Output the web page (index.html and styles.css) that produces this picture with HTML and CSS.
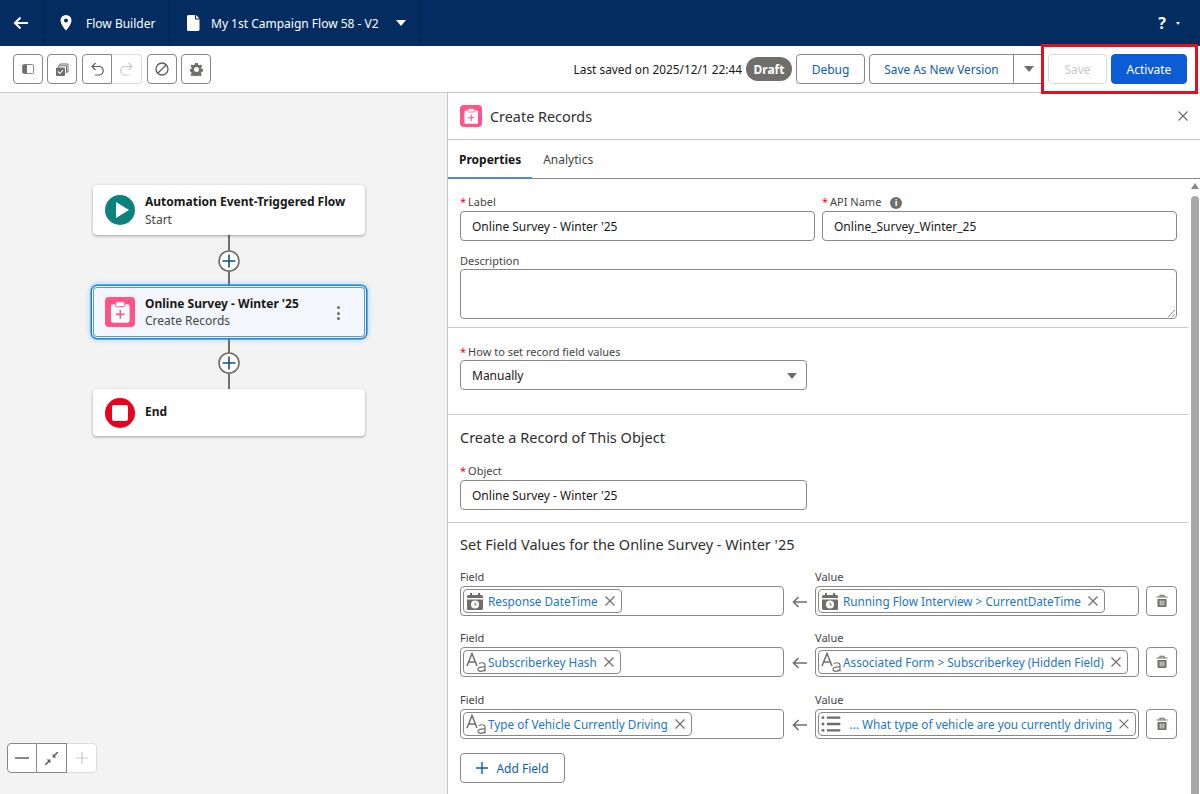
FILE: index.html
```html
<!DOCTYPE html>
<html lang="en">

<head>
    <meta charset="UTF-8">
    <title>Flow Builder</title>
    <link rel="stylesheet" href="styles.css">
</head>

<body>
    <svg class="defs" width="0" height="0">
        <symbol id="clip" viewBox="0 0 22 22">
            <rect x="4.400" y="5.400" width="13.600" height="13.400" rx="1.500" fill="#fff" />
            <rect x="7.800" y="3.500" width="6.800" height="3.600" rx="1.200" fill="#fff" stroke="#ff538a" stroke-width=".7" />
            <path d="M11.200 9.500v6.500M8 12.700h6.400" stroke="#ff538a" stroke-width="1.100" />
        </symbol>
        <symbol id="cal" viewBox="0 0 18 18">
            <path d="M1 4.500Q1 3 2.500 3h13Q17 3 17 4.500V6H1z" fill="#706e6b" />
            <path d="M4 1h2v2H4zM12 1h2v2h-2z" fill="#706e6b" />
            <path d="M1 7.500h16v9q0 1.500-1.500 1.500h-13Q1 18 1 16.500z" fill="#706e6b" />
            <circle cx="9" cy="12.500" r="4" fill="#fff" />
            <path d="M9 10.500v2.300h1.800" fill="none" stroke="#706e6b" stroke-width="1" />
        </symbol>
        <symbol id="text" viewBox="0 0 20 20">
            <path d="M1 14 6 1.500 11 14M2.800 10h6.400" fill="none" stroke="#706e6b" stroke-width="1.500" />
            <path d="M12.800 11.500q3.600-1.500 5.500 0 .7.600.7 2V19.500M19 15q-7-.5-7 2.300 0 2 2.800 2 2.700 0 4.200-2" fill="none" stroke="#706e6b" stroke-width="1.200" />
        </symbol>
        <symbol id="list" viewBox="0 0 20 20">
            <path d="M6 3.500h14M6 10h14M6 16.500h14" stroke="#706e6b" stroke-width="2.400" />
            <circle cx="2" cy="3.500" r="1.500" fill="#706e6b" />
            <circle cx="2" cy="10" r="1.500" fill="#706e6b" />
            <circle cx="2" cy="16.500" r="1.500" fill="#706e6b" />
        </symbol>
        <symbol id="x" viewBox="0 0 12 12">
            <path d="M1.500 1.500l9 9M10.500 1.500l-9 9" stroke="#706e6b" stroke-width="1.200" />
        </symbol>
        <symbol id="trash" viewBox="0 0 14 14">
            <path d="M5 2.500V1.200h4v1.300M1.500 3h11" fill="none" stroke="#706e6b" stroke-width="1.100" />
            <path d="M2.500 5h9v7q0 1-1 1h-7q-1 0-1-1z" fill="#706e6b" />
            <path d="M5.200 6.500v5M7 6.500v5M8.800 6.500v5" stroke="#fff" stroke-width=".8" />
        </symbol>
        <symbol id="left" viewBox="0 0 15 12">
            <path d="M15 6H1.500M6.500 1 1.500 6l5 5" fill="none" stroke="#706e6b" stroke-width="1.600" />
        </symbol>
        <symbol id="add" viewBox="0 0 22 22">
            <circle cx="11" cy="11" r="10" fill="#fff" stroke="#706e6b" stroke-width="1.600" />
            <path d="M11 4.500v13M4.500 11h13" stroke="#0b4f93" stroke-width="1.600" />
        </symbol>
    </svg>

    <header class="topbar">
        <div class="topcell backcell">
            <svg width="15" height="14" viewBox="0 0 15 14">
                <path d="M15 7H2M7.500 1.500 2 7l5.500 5.500" fill="none" stroke="#fff" stroke-width="2" />
            </svg>
        </div>
        <div class="topcell appcell">
            <svg width="12" height="16" viewBox="0 0 12 16">
                <path fill-rule="evenodd" fill="#fff" d="M6 0a5.500 5.500 0 0 0-5.500 5.500C.5 9.500 6 15.500 6 15.500s5.500-6 5.500-10A5.500 5.500 0 0 0 6 0zm0 7.500a2 2 0 1 1 0-4 2 2 0 0 1 0 4z" />
            </svg>
            <span>Flow Builder</span>
        </div>
        <div class="topcell flowcell">
            <svg width="13" height="16" viewBox="0 0 13 16">
                <path fill="#fff" d="M1.500 0H8v4.500h4.500V14.500q0 1.500-1.500 1.500H1.500Q0 16 0 14.500v-13Q0 0 1.500 0zM9 0l3.500 3.500H9z" />
            </svg>
            <span>My 1st Campaign Flow 58 - V2</span>
            <i class="caret white"></i>
        </div>
        <div class="helpbox">
            <span class="help">?</span>
            <i class="caret tiny"></i>
        </div>
    </header>

    <div class="toolbar">
        <div class="iconbtn">
            <svg width="12" height="10" viewBox="0 0 12 10">
                <rect x=".5" y=".5" width="11" height="9" rx="1" fill="none" stroke="#8a8886" />
                <rect x="1" y="1" width="4" height="8" fill="#706e6b" />
            </svg>
        </div>
        <div class="iconbtn">
            <svg width="13" height="13" viewBox="0 0 13 13">
                <path d="M4 2.500V1h8v8h-1.500M2.500 4V2.800h8V10" fill="none" stroke="#706e6b" />
                <rect x="0" y="4.500" width="9" height="8.500" rx="1" fill="#706e6b" />
                <path d="M2 8.500l2 2 3-3.500" fill="none" stroke="#fff" stroke-width="1.100" />
            </svg>
        </div>
        <div class="btngroup undogroup">
            <div class="iconbtn">
                <svg width="13" height="14" viewBox="0 0 13 14">
                    <path d="M1.500 4.500H8a4 4 0 0 1 0 8.500H4M4.500 1 1 4.500 4.500 8" fill="none" stroke="#5c5c5c" stroke-width="1.200" />
                </svg>
            </div>
            <div class="iconbtn disabled">
                <svg width="13" height="14" viewBox="0 0 13 14">
                    <path d="M11.500 4.500H5a4 4 0 0 0 0 8.500h4M8.500 1 12 4.500 8.500 8" fill="none" stroke="#c9c9c9" stroke-width="1.200" />
                </svg>
            </div>
        </div>
        <div class="iconbtn">
            <svg width="14" height="14" viewBox="0 0 14 14">
                <circle cx="7" cy="7" r="6" fill="none" stroke="#5c5c5c" stroke-width="1.300" />
                <path d="M3 11 11 3" stroke="#5c5c5c" stroke-width="1.300" />
            </svg>
        </div>
        <div class="iconbtn">
            <svg width="13" height="13" viewBox="0 0 13 13">
                <path fill-rule="evenodd" fill="#706e6b" d="M5.200 0h2.600l.4 1.700 1.300.6 1.500-.9 1.200 1.800-1.200 1.200.3 1.300 1.700.6v2.200l-1.700.5-.4 1.400 1 1.400-1.600 1.500-1.400-.9-1.300.5-.4 1.600H5.200l-.4-1.600-1.300-.5-1.400.9L.5 11.900l1-1.400-.4-1.400L0 8.500V6.300l1.400-.6.300-1.300L.5 3.200l1.200-1.800 1.500.9 1.300-.6zM6.500 4a2.500 2.500 0 1 0 0 5 2.500 2.500 0 0 0 0-5z" />
            </svg>
        </div>
        <div class="toolright">
            <span class="saved">Last saved on 2025/12/1 22:44</span>
            <span class="badge">Draft</span>
            <div class="btn debug">Debug</div>
            <div class="btngroup">
                <div class="btn saveas">Save As New Version</div>
                <div class="btn more"><i class="caret gray"></i></div>
            </div>
            <div class="btn save">Save</div>
            <div class="btn activate">Activate</div>
        </div>
        <div class="highlight"></div>
    </div>

    <main class="workspace">
        <section class="canvas">
            <div class="flowcol">
                <div class="node startnode">
                    <span class="nodeicon round teal">
                        <svg width="14" height="16" viewBox="0 0 14 16"><path d="M1 0 14 8 1 16z" fill="#fff" /></svg>
                    </span>
                    <div>
                        <div class="nodetitle">Automation Event-Triggered Flow</div>
                        <div class="nodesub">Start</div>
                    </div>
                </div>
                <div class="link first"><svg width="22" height="22"><use href="#add" /></svg></div>
                <div class="node selected">
                    <span class="nodeicon pink"><svg width="30" height="30"><use href="#clip" /></svg></span>
                    <div>
                        <div class="nodetitle">Online Survey - Winter '25</div>
                        <div class="nodesub">Create Records</div>
                    </div>
                    <span class="dots"><i></i><i></i><i></i></span>
                </div>
                <div class="link second"><svg width="22" height="22"><use href="#add" /></svg></div>
                <div class="node endnode">
                    <span class="nodeicon round red"><b></b></span>
                    <div class="nodetitle">End</div>
                </div>
            </div>
            <div class="zoomctl">
                <div class="zoombtn"><svg width="14" height="2"><rect width="14" height="2" fill="#8a8886" /></svg></div>
                <div class="zoombtn">
                    <svg width="13" height="13" viewBox="0 0 12 12">
                        <path d="M12 0 8 4M0 12l4-4" stroke="#5c5c5c" stroke-width="1.400" />
                        <path d="M7 1.500V5h3.500zM5 10.500V7H1.500z" fill="#5c5c5c" />
                    </svg>
                </div>
                <div class="zoombtn off">
                    <svg width="12" height="12"><path d="M6 0v12M0 6h12" stroke="#c9c9c9" stroke-width="1.200" /></svg>
                </div>
            </div>
        </section>

        <section class="panel">
            <div class="panelhead">
                <span class="panelicon"><svg width="22" height="22"><use href="#clip" /></svg></span>
                <h2>Create Records</h2>
                <svg class="panelclose" width="12" height="12"><use href="#x" /></svg>
            </div>
            <div class="tabs">
                <span class="tab active">Properties</span>
                <span class="tab">Analytics</span>
            </div>
            <div class="panelbody">
                <div class="content">
                    <div class="sec firstsec">
                        <div class="tworow">
                            <div class="fld">
                                <label><em>*</em>Label</label>
                                <div class="input">Online Survey - Winter '25</div>
                            </div>
                            <div class="fld">
                                <label><em>*</em>API Name <span class="info">i</span></label>
                                <div class="input">Online_Survey_Winter_25</div>
                            </div>
                        </div>
                        <div class="fld desc">
                            <label>Description</label>
                            <div class="input area">
                                <svg class="grip" width="8" height="8"><path d="M1 8 8 1M5 8l3-3" stroke="#706e6b" stroke-width=".8" /></svg>
                            </div>
                        </div>
                    </div>
                    <div class="sec howsec">
                        <div class="fld narrow">
                            <label><em>*</em>How to set record field values</label>
                            <div class="input select">Manually<i class="caret gray"></i></div>
                        </div>
                    </div>
                    <div class="sec objsec">
                        <h3>Create a Record of This Object</h3>
                        <div class="fld narrow">
                            <label><em>*</em>Object</label>
                            <div class="input">Online Survey - Winter '25</div>
                        </div>
                    </div>
                    <div class="sec last">
                        <h3>Set Field Values for the Online Survey - Winter '25</h3>
                        <div class="maprows">
                            <div class="maprow">
                                <div class="fld">
                                    <label>Field</label>
                                    <div class="input chipbox">
                                        <span class="chip"><svg width="18" height="18"><use href="#cal" /></svg><a>Response DateTime</a><svg class="chipx" width="12" height="12"><use href="#x" /></svg></span>
                                    </div>
                                </div>
                                <svg class="arrow" width="15" height="12"><use href="#left" /></svg>
                                <div class="fld">
                                    <label>Value</label>
                                    <div class="input chipbox">
                                        <span class="chip"><svg width="18" height="18"><use href="#cal" /></svg><a>Running Flow Interview &gt; CurrentDateTime</a><svg class="chipx" width="12" height="12"><use href="#x" /></svg></span>
                                    </div>
                                </div>
                                <div class="trashbtn"><svg width="14" height="14"><use href="#trash" /></svg></div>
                            </div>
                            <div class="maprow">
                                <div class="fld">
                                    <label>Field</label>
                                    <div class="input chipbox">
                                        <span class="chip"><svg class="txticon" width="20" height="20"><use href="#text" /></svg><a>Subscriberkey Hash</a><svg class="chipx" width="12" height="12"><use href="#x" /></svg></span>
                                    </div>
                                </div>
                                <svg class="arrow" width="15" height="12"><use href="#left" /></svg>
                                <div class="fld">
                                    <label>Value</label>
                                    <div class="input chipbox">
                                        <span class="chip"><svg class="txticon" width="20" height="20"><use href="#text" /></svg><a>Associated Form &gt; Subscriberkey (Hidden Field)</a><svg class="chipx" width="12" height="12"><use href="#x" /></svg></span>
                                    </div>
                                </div>
                                <div class="trashbtn"><svg width="14" height="14"><use href="#trash" /></svg></div>
                            </div>
                            <div class="maprow lastrow">
                                <div class="fld">
                                    <label>Field</label>
                                    <div class="input chipbox">
                                        <span class="chip"><svg class="txticon" width="20" height="20"><use href="#text" /></svg><a>Type of Vehicle Currently Driving</a><svg class="chipx" width="12" height="12"><use href="#x" /></svg></span>
                                    </div>
                                </div>
                                <svg class="arrow" width="15" height="12"><use href="#left" /></svg>
                                <div class="fld">
                                    <label>Value</label>
                                    <div class="input chipbox">
                                        <span class="chip fullchip"><svg width="20" height="20"><use href="#list" /></svg><a class="ellip">... What type of vehicle are you currently driving</a><svg class="chipx" width="12" height="12"><use href="#x" /></svg></span>
                                    </div>
                                </div>
                                <div class="trashbtn"><svg width="14" height="14"><use href="#trash" /></svg></div>
                            </div>
                        </div>
                        <div class="btn addfield">
                            <svg width="12" height="12"><path d="M6 0v12M0 6h12" stroke="#0b5cab" stroke-width="1.400" /></svg>
                            Add Field
                        </div>
                    </div>
                </div>
                <div class="scrollbar">
                    <i class="scrollup"></i>
                    <div class="thumb"></div>
                </div>
            </div>
        </section>
    </main>
</body>

</html>
```

FILE: styles.css
```css
* {
    box-sizing: border-box;
}

html,
body {
    margin: 0;
    height: 794px;
    overflow: hidden;
}

body {
    font-family: "Noto Sans", "Open Sans", Arial, sans-serif;
    font-size: 12px;
    color: #181818;
    background-color: #fff;
    display: flex;
    flex-direction: column;
}

.defs {
    position: absolute;
}

/* top navy bar */
.topbar {
    height: 46px;
    background-color: #032d60;
    color: #fff;
    display: flex;
    flex-shrink: 0;
}

.topcell {
    display: flex;
    align-items: center;
    height: 100%;
    border-right: 1px solid #02224a;
}

.backcell {
    width: 44px;
    padding-left: 13px;
}

.appcell {
    width: 126px;
    padding-left: 16px;
    gap: 14px;
}

.flowcell {
    width: 250px;
    padding-left: 17px;
    gap: 11px;
}

.flowcell .caret {
    margin-left: 6px;
}

.helpbox {
    margin-left: auto;
    padding-right: 20px;
    display: flex;
    align-items: center;
    gap: 10px;
}

.help {
    font-size: 16px;
    font-weight: bold;
}

.caret {
    display: inline-block;
    width: 0;
    height: 0;
    border-left: 5px solid transparent;
    border-right: 5px solid transparent;
    border-top: 6px solid #fff;
}

.caret.tiny {
    border-left-width: 2.500px;
    border-right-width: 2.500px;
    border-top-width: 3px;
}

.caret.gray {
    border-top-color: #706e6b;
}

/* toolbar */
.toolbar {
    height: 47px;
    flex-shrink: 0;
    border-bottom: 1px solid #c9c9c9;
    padding: 8px 13px 0;
    display: flex;
    align-items: flex-start;
    gap: 4px;
    position: relative;
}

.iconbtn {
    width: 30px;
    height: 30px;
    border: 1px solid #8a8886;
    border-radius: 4px;
    display: flex;
    align-items: center;
    justify-content: center;
    background-color: #fff;
}

.btngroup {
    display: flex;
}

.undogroup {
    margin: 0 1px;
}

.btngroup .iconbtn:first-child,
.btngroup .btn:first-child {
    border-radius: 4px 0 0 4px;
}

.btngroup .iconbtn:last-child,
.btngroup .btn:last-child {
    border-radius: 0 4px 4px 0;
    border-left: none;
}

.iconbtn.disabled {
    border-color: #dcdcdc;
}

.toolright {
    margin-left: auto;
    display: flex;
    align-items: center;
    gap: 4px;
}

.saved {
    font-size: 11.850px;
}

.badge {
    width: 46px;
    height: 24px;
    border-radius: 12px;
    background-color: #706e6b;
    color: #fff;
    font-weight: bold;
    display: flex;
    align-items: center;
    justify-content: center;
}

.btn {
    height: 30px;
    border: 1px solid #8a8886;
    border-radius: 4px;
    background-color: #fff;
    color: #0b5cab;
    display: flex;
    align-items: center;
    justify-content: center;
}

.debug {
    width: 69px;
}

.saveas {
    width: 145px;
    font-size: 11.800px;
}

.more {
    width: 30px;
}

.save {
    width: 59px;
    color: #c9c9c9;
    border-color: #dcdcdc;
}

.activate {
    width: 76px;
    background-color: #0b5cd5;
    border-color: #0b5cd5;
    color: #fff;
}

.highlight {
    position: absolute;
    left: 1041px;
    top: -2px;
    width: 157px;
    height: 50px;
    border: 3px solid #e2101f;
    pointer-events: none;
}

/* main area */
.workspace {
    flex: 1;
    display: flex;
    min-height: 0;
}

.canvas {
    width: 448px;
    flex-shrink: 0;
    background-color: #f3f3f3;
    border-right: 1px solid #c9c9c9;
    position: relative;
    padding: 92px 0 0 93px;
}

.flowcol {
    width: 272px;
}

.node {
    background-color: #fff;
    border-radius: 4px;
    box-shadow: 0 1px 3px rgba(0, 0, 0, 0.35);
    display: flex;
    align-items: center;
    padding-left: 12px;
    gap: 10px;
    position: relative;
}

.startnode {
    height: 50px;
}

.startnode .nodesub {
    margin-top: 1px;
}

.endnode {
    height: 47px;
    padding-bottom: 2px;
}

.endnode .nodeicon {
    margin-top: 2px;
}

.selected {
    height: 50px;
    margin: 2px 0;
    background-color: #f3f6fb;
    box-shadow: inset 0 0 0 1px #4a9be0, 0 0 0 1px #fff, 0 0 0 2.500px #1b7fd0, 0 0 5px 3px rgba(27, 150, 232, 0.35);
}

.nodeicon {
    width: 30px;
    height: 30px;
    border-radius: 4px;
    flex-shrink: 0;
    display: flex;
    align-items: center;
    justify-content: center;
}

.nodeicon.round {
    border-radius: 50%;
}

.teal {
    background-color: #0b827c;
}

.teal svg {
    margin-left: 3px;
}

.pink {
    background-color: #ff538a;
}

.red {
    background-color: #ea001e;
}

.red b {
    width: 16px;
    height: 16px;
    background-color: #fff;
    border-radius: 2px;
}

.nodetitle {
    font-weight: bold;
    color: #181818;
}

.nodesub {
    color: #444;
}

.dots {
    position: absolute;
    right: 25px;
    top: 19px;
    display: flex;
    flex-direction: column;
    gap: 2.500px;
}

.dots i {
    width: 3px;
    height: 3px;
    border-radius: 50%;
    background-color: #706e6b;
}

.link {
    height: 50px;
    display: flex;
    align-items: center;
    justify-content: center;
    background: linear-gradient(#706e6b, #706e6b) center / 2px 100% no-repeat;
}

.first {
    padding-top: 2px;
}

.second {
    padding-bottom: 2px;
}

.zoomctl {
    position: absolute;
    left: 7px;
    bottom: 21px;
    height: 30px;
    display: flex;
    background-color: #fff;
    border-radius: 4px;
}

.zoombtn {
    width: 30px;
    height: 30px;
    border: 1px solid #8a8886;
    border-left: none;
    display: flex;
    align-items: center;
    justify-content: center;
}

.zoombtn:first-child {
    border-left: 1px solid #8a8886;
    border-radius: 4px 0 0 4px;
}

.zoombtn.off {
    border-color: #dcdcdc;
    border-radius: 0 4px 4px 0;
}

/* right panel */
.panel {
    flex: 1;
    min-width: 0;
    display: flex;
    flex-direction: column;
    background-color: #fff;
}

.panelhead {
    height: 47px;
    flex-shrink: 0;
    border-bottom: 1px solid #c9c9c9;
    padding: 0 11px 0 12px;
    display: flex;
    align-items: center;
    gap: 8px;
}

.panelicon {
    width: 22px;
    height: 22px;
    border-radius: 4px;
    background-color: #ff538a;
}

.panelicon svg {
    display: block;
}

.panelhead h2 {
    margin: 0;
    font-size: 14.400px;
    font-weight: normal;
    color: #2e2e2e;
}

.panelclose {
    margin-left: auto;
}

.tabs {
    height: 39px;
    flex-shrink: 0;
    border-bottom: 1px solid #8a8886;
    display: flex;
    align-items: stretch;
}

.tab {
    padding: 0 11px;
    display: flex;
    align-items: center;
    color: #444;
}

.tab.active {
    font-weight: bold;
    color: #181818;
    margin-bottom: -1px;
    padding-top: 1px;
    border-bottom: 2px solid #5a7de8;
}

.panelbody {
    flex: 1;
    min-height: 0;
    display: flex;
    overflow: hidden;
}

.content {
    width: 740px;
    flex-shrink: 0;
}

.sec {
    padding: 0 11px 0 12px;
    border-bottom: 1px solid #c9c9c9;
}

.sec.last {
    border-bottom: none;
    padding-top: 11px;
}

.firstsec {
    padding-top: 16px;
    padding-bottom: 8px;
}

.howsec {
    padding-top: 16px;
    padding-bottom: 24px;
}

.objsec {
    padding-top: 12px;
    padding-bottom: 12px;
}

.tworow {
    display: flex;
    gap: 7px;
}

.tworow .fld {
    width: 355px;
}

.desc {
    margin-top: 12px;
}

.narrow {
    width: 347px;
}

label {
    display: block;
    height: 16px;
    line-height: 14px;
    color: #444;
    font-size: 11px;
}

.desc label,
.howsec label {
    line-height: 15px;
}

label em {
    color: #ea001e;
    font-style: normal;
    margin-right: 2px;
}

.info {
    display: inline-block;
    width: 12px;
    height: 12px;
    margin-left: 6px;
    border-radius: 50%;
    background-color: #706e6b;
    color: #fff;
    font-size: 9px;
    font-weight: bold;
    line-height: 12px;
    text-align: center;
}

.input {
    height: 30px;
    border: 1px solid #8a8886;
    border-radius: 4px;
    padding: 0 11px;
    display: flex;
    align-items: center;
    background-color: #fff;
    position: relative;
}

.input.area {
    height: 50px;
}

.grip {
    position: absolute;
    right: 1px;
    bottom: 1px;
}

.select {
    justify-content: space-between;
    padding-top: 1px;
    padding-right: 9px;
}

h3 {
    margin: 0;
    height: 20px;
    line-height: 20px;
    font-size: 14.500px;
    font-weight: normal;
    color: #2e2e2e;
}

.objsec h3 {
    margin-bottom: 17px;
}

.last h3 {
    margin-bottom: 16px;
}

.maprows {
    display: flex;
    flex-direction: column;
    gap: 15px;
}

.lastrow {
    margin-top: 1px;
}

.maprow {
    display: grid;
    grid-template-columns: 324px 31px 324px 31px;
    align-items: end;
}

.arrow {
    justify-self: center;
    margin-bottom: 8px;
}

.trashbtn {
    margin-left: 7px;
    width: 31px;
    height: 30px;
    border: 1px solid #8a8886;
    border-radius: 4px;
    display: flex;
    align-items: center;
    justify-content: center;
}

.chipbox {
    padding: 0 2px;
}

.chip {
    height: 24px;
    border: 1px solid #8a8886;
    border-radius: 4px;
    padding: 0 5px 0 2px;
    display: flex;
    align-items: center;
    gap: 4px;
    white-space: nowrap;
}

.fullchip {
    width: 100%;
}

.chip a {
    color: #1b76c8;
    font-size: 11.750px;
}

.txticon {
    margin-right: -2px;
}

.ellip {
    margin-left: 5px;
}

.chipx {
    margin-left: 2px;
}

.addfield {
    margin-top: 14px;
    width: 105px;
    gap: 8px;
}

.scrollbar {
    flex: 1;
    position: relative;
    padding-top: 17px;
}

.scrollup {
    position: absolute;
    left: 3px;
    top: 4px;
    border-left: 4px solid transparent;
    border-right: 4px solid transparent;
    border-bottom: 6px solid #8a8886;
}

.thumb {
    width: 8px;
    margin-left: 3px;
    height: 100%;
    border-radius: 4px 4px 0 0;
    background-color: #a8a8a8;
}
```
